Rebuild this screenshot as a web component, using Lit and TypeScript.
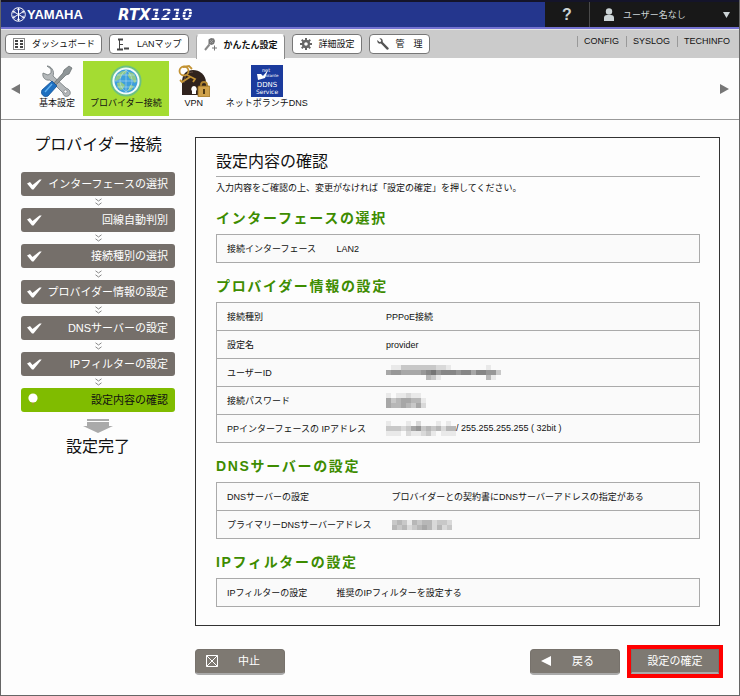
import { LitElement, html, svg, css, nothing } from "lit";
import { customElement, property } from "lit/decorators.js";

type Row = { label: string; value?: string; mask?: string[] };
type Section = { title: string; rows: Row[] };

// Each digit is the darkness (0-9) of one mosaic cell.
const SECTIONS: Section[] = [
  { title: "インターフェースの選択", rows: [{ label: "接続インターフェース", value: "LAN2" }] },
  {
    title: "プロバイダー情報の設定",
    rows: [
      { label: "接続種別", value: "PPPoE接続" },
      { label: "設定名", value: "provider" },
      { label: "ユーザーID", mask: ["01133333332210000000100", "56655556786777677577663", "00000000431000000000410"] },
      { label: "接続パスワード", mask: ["10112110", "53455441", "54454352"] },
      { label: "PPインターフェースの IPアドレス", mask: ["10001020001010", "33323563434244", "11102112310111"], value: "/ 255.255.255.255 ( 32bit )" },
    ],
  },
  {
    title: "DNSサーバーの設定",
    rows: [
      { label: "DNSサーバーの設定", value: "プロバイダーとの契約書にDNSサーバーアドレスの指定がある" },
      { label: "プライマリーDNSサーバーアドレス", mask: ["343143442332", "434234542423"] },
    ],
  },
  { title: "IPフィルターの設定", rows: [{ label: "IPフィルターの設定", value: "推奨のIPフィルターを設定する" }] },
];

const STEPS = [
  "インターフェースの選択",
  "回線自動判別",
  "接続種別の選択",
  "プロバイダー情報の設定",
  "DNSサーバーの設定",
  "IPフィルターの設定",
  "設定内容の確認",
];

const gearTeeth = [0, 45, 90, 135, 180, 225, 270, 315];

const icons = {
  dashboard: html`<svg width="12" height="12" viewBox="0 0 12 12" aria-hidden="true">
    <rect x="0.5" y="0.5" width="11" height="11" fill="#fff" stroke="#888" />
    <path d="M2 2h3v2H2zM2 5h3v2H2zM2 8h3v2H2zM7 2h3v2H7zM7 5h3v2H7zM7 8h3v2H7z" fill="#444" />
  </svg>`,
  map: html`<svg width="13" height="13" viewBox="0 0 13 13" aria-hidden="true">
    <path d="M1 1.500h5M0 11.500h6M7 10.500h5" fill="none" stroke="#444" stroke-width="2" />
    <path d="M2.500 1v11M3 6.500h3" stroke="#444" />
  </svg>`,
  wand: html`<svg width="13" height="13" viewBox="0 0 13 13" aria-hidden="true">
    <path d="M1 12L5.500 6.500" stroke="#888" stroke-width="2" />
    <path d="M4.500 1.500L7 0l3 .5L11 3l-1 3-2.500 1L4.500 6z" fill="#777" />
    <path d="M6 2l3 3M9 2L6 5" stroke="#aaa" stroke-width="0.700" />
    <path d="M10.500 7.500v5M8 10h5" stroke="#777" />
  </svg>`,
  gear: html`<svg width="12" height="12" viewBox="0 0 12 12" aria-hidden="true">
    ${gearTeeth.map((a) => svg`<rect x="5" y="0" width="2" height="3" fill="#666" transform="rotate(${a} 6 6)" />`)}
    <circle cx="6" cy="6" r="3" fill="none" stroke="#666" stroke-width="2.4" />
  </svg>`,
  wrench: html`<svg width="12" height="12" viewBox="0 0 12 12" aria-hidden="true">
    <path d="M2.300 0.300L4.200 2.200 3.900 3.700 2.400 4 0.400 2.100C-0.200 4.300 1.500 6.200 3.900 5.600L9.700 11.400C10.900 12.400 12.500 10.900 11.400 9.700L5.700 4C6.200 1.600 4.500-0.300 2.300 0.300z" fill="#555" />
  </svg>`,
  tools: html`<svg width="32" height="32" viewBox="0 0 32 32" aria-hidden="true">
    <path d="M6 1l4 3v4l-3 2-5-2c-1 4 2 8 7 7l13 13c0 3 3 4 5 3 3-1 3-5 0-7l-2-1L12 11c2-5-2-10-6-10z" fill="#b4b8ba" stroke="#70777a" stroke-width="0.800" />
    <circle cx="24.500" cy="26.500" r="1.600" fill="#fff" stroke="#777" stroke-width="0.600" />
    <path d="M28 1l3 2-3 6-3 1-10 10-2-2L22 8l1-3z" fill="#8f9698" stroke="#646a6c" stroke-width="0.700" />
    <path d="M11 16l5 5L7 31c-4 2-8-2-6-6z" fill="#1e6fc0" stroke="#0e4f95" stroke-width="0.800" />
    <path d="M11 19L4 27" stroke="#63b3f0" stroke-width="1.400" />
  </svg>`,
  globe: html`<svg width="32" height="32" viewBox="0 0 32 32" aria-hidden="true">
    <circle cx="16" cy="16" r="15.500" fill="#6cc084" />
    <circle cx="16" cy="16" r="13.600" fill="#f2fbfb" />
    <circle cx="16" cy="16" r="11.500" fill="#3e9fdc" />
    <path d="M8 9c3-3 7-4 9-3l-2 3-3 1-1 3-3 2-3 1c0-3 1-5 3-7zM7 18l4-1 4 3-2 4-2 1c-2-1-4-4-4-7zM19 7l4 1c3 3 4 6 3 9l-2 1-1-3-3-1-2-3zM20 20l4 1-3 4-3 1z" fill="#8fc98a" />
    <path d="M16 5v22M5 16h22M7 10h18M7 22h18M16 5c-8 6-8 16 0 22M16 5c8 6 8 16 0 22" fill="none" stroke="#c4e4f4" stroke-width="0.500" />
  </svg>`,
  vpn: html`<svg width="32" height="32" viewBox="0 0 32 32" aria-hidden="true">
    <path d="M4 30V18C4 8 9 5 15 5s13 4 13 13v12z" fill="#30231d" />
    <path d="M6 18c0-7 4-11 9-11" fill="none" stroke="#665046" />
    <path d="M16 21a3 3 0 0 1 2 5v3h-4v-3a3 3 0 0 1 2-5z" fill="#fff" />
    <circle cx="6" cy="6" r="4.500" fill="none" stroke="#c39334" stroke-width="1.800" />
    <path d="M9 10l8 4-2 3M12 12l-8 5-2-2M5 2l6-1 3 3" fill="none" stroke="#c39334" stroke-width="1.800" />
    <path d="M23 22v-2c0-4 6-4 6 0v2" fill="none" stroke="#af8430" stroke-width="1.800" />
    <rect x="20" y="21" width="12" height="11" rx="1" fill="#d0a24a" stroke="#8c6620" stroke-width="0.800" />
    <path d="M26 24v5" stroke="#513b12" stroke-width="2" />
  </svg>`,
  ddns: html`<svg width="32" height="32" viewBox="0 0 32 32" aria-hidden="true">
    <rect width="32" height="32" fill="#1b3b9d" />
    <path d="M6 9h4l2 2 5-6-3 8-7 2z" fill="#fff" />
    <g fill="#fff" font-family="DejaVu Sans, sans-serif" text-anchor="middle">
      <text x="15" y="7" font-size="5">net</text>
      <text x="20" y="12" font-size="4">volante</text>
      <text x="16" y="22" font-size="7">DDNS</text>
      <text x="16" y="29" font-size="6">Service</text>
    </g>
  </svg>`,
};

const SHARED = css`
  * { box-sizing: border-box; }
  svg { display: block; flex: none; }
  button { font: inherit; border: 0; cursor: pointer; }
  a { color: inherit; text-decoration: none; }
`;

@customElement("mosaic-mask")
class MosaicMask extends LitElement {
  @property({ attribute: false }) rows: string[] = [];
  static styles = css`
    :host { display: inline-block; vertical-align: middle; }
    svg { display: block; }
  `;
  render() {
    const w = this.rows[0].length * 5;
    const h = this.rows.length * 5;
    return html`<svg width=${w} height=${h} role="img" aria-label="非表示">
      ${this.rows.map((r, y) =>
        [...r].map((c, x) => svg`<rect x=${x * 5} y=${y * 5} width="5" height="5" fill="#333" fill-opacity=${Number(c) / 12} />`)
      )}
    </svg>`;
  }
}

@customElement("site-header")
class SiteHeader extends LitElement {
  static styles = [SHARED, css`
    :host { display: block; }
    .bar { display: flex; height: 29px; border-top: 2px solid #14142a; border-bottom: 2px solid #7472d2; background: #24368d; color: #fff; }
    .brand { display: flex; flex: 1; align-items: center; padding-left: 10px; }
    .yamaha { display: flex; align-items: center; gap: 1px; width: 107px; font: bold 13px/24px "Liberation Sans", sans-serif; }
    .model { font: italic bold 15px/24px "DejaVu Sans", sans-serif; }
    .striped { color: transparent; background: repeating-linear-gradient(#fff 0 2px, #6672b4 2px 3px); background-clip: text; -webkit-background-clip: text; }
    .help, .user { display: flex; align-items: center; background: #181818; color: #ccd4d6; padding: 0; }
    .help { justify-content: center; width: 44px; font-weight: bold; font-size: 16px; }
    .user { width: 150px; padding: 0 9px 0 14px; gap: 9px; border-left: 1px solid #4a4a4a; }
    .name { flex: 1; text-align: left; }
    .tools { display: flex; height: 29px; padding: 4px 9px 0 4px; border-top: 1px solid #e6e6e6; background: #cbcbcb; }
    .tabs { display: flex; flex: 1; gap: 7px; align-items: flex-start; }
    .tab { display: flex; align-items: center; gap: 7px; height: 20px; padding: 0 6px 0 7px; background: #fff; border: 1px solid #777; border-radius: 4px; white-space: nowrap; color: #111; }
    .active { height: 25px; padding-bottom: 5px; border-bottom: 0; border-radius: 4px 4px 0 0; font-weight: bold; border-color: #fff #888 #fff #aaa; }
    .links { display: flex; align-items: flex-start; color: #111; padding-top: 2px; }
    .links a { padding: 0 7px 0 6px; border-left: 1px solid #999; line-height: 11px; }
    .links a:last-child { padding-right: 0; }
  `];
  render() {
    return html`<header>
      <div class="bar">
        <div class="brand">
          <span class="yamaha">
            <svg width="15" height="15" viewBox="0 0 15 15" aria-hidden="true">
              <circle cx="7.500" cy="7.500" r="6.800" fill="none" stroke="#fff" />
              <path d="M7.500 1v13M2 4.300l11 6.400M13 4.300L2 10.700" stroke="#fff" />
              <path d="M6 3l1.500-1L9 3M2.800 6.300V4.600l1.600-.8M12.200 6.300V4.600l-1.600-.8M6 12l1.500 1L9 12M2.800 8.700v1.700l1.600.8M12.200 8.700v1.700l-1.600.8" fill="none" stroke="#fff" stroke-width="0.800" />
            </svg>YAMAHA</span>
          <span class="model">RTX<span class="striped">1210</span></span>
        </div>
        <button class="help">?</button>
        <button class="user">
          <svg width="10" height="14" viewBox="0 0 10 14" aria-hidden="true"><circle cx="5" cy="3.500" r="3.200" fill="#ccd4d6" /><path d="M0 13V10c0-2 1-3 3-3h4c2 0 3 1 3 3v3z" fill="#ccd4d6" /></svg>
          <span class="name">ユーザー名なし</span>
          <svg width="7" height="6" viewBox="0 0 7 6" aria-hidden="true"><path d="M0 0h7L3.500 6z" fill="#ccd4d6" /></svg>
        </button>
      </div>
      <div class="tools">
        <nav class="tabs">
          <a class="tab" href="#dashboard">${icons.dashboard}ダッシュボード</a>
          <a class="tab" href="#lanmap">${icons.map}LANマップ</a>
          <a class="tab active" href="#easy" aria-current="page">${icons.wand}かんたん設定</a>
          <a class="tab" href="#detail">${icons.gear}詳細設定</a>
          <a class="tab" href="#admin">${icons.wrench}管　理</a>
        </nav>
        <nav class="links"><a href="#config">CONFIG</a><a href="#syslog">SYSLOG</a><a href="#techinfo">TECHINFO</a></nav>
      </div>
    </header>`;
  }
}

@customElement("category-nav")
class CategoryNav extends LitElement {
  static styles = [SHARED, css`
    :host { display: block; }
    .nav { display: flex; align-items: center; height: 62px; padding: 3px 10px; border-bottom: 1px solid #999; }
    .arrow { padding: 0; background: none; }
    .tiles { display: flex; flex: 1; margin-left: 11px; }
    .tile { display: flex; flex-direction: column; align-items: center; min-width: 50px; height: 55px; padding: 4px 7px 0; line-height: 12px; white-space: nowrap; }
    .tile:first-child { min-width: 52px; }
    .tile.on { background: #a4dc32; }
  `];
  render() {
    return html`<nav class="nav">
      <button class="arrow" aria-label="前へ"><svg width="9" height="10" viewBox="0 0 9 10"><path d="M9 0v10L0 5z" fill="#777" /></svg></button>
      <div class="tiles">
        <a class="tile" href="#basic">${icons.tools}基本設定</a>
        <a class="tile on" href="#provider" aria-current="page">${icons.globe}プロバイダー接続</a>
        <a class="tile" href="#vpn">${icons.vpn}VPN</a>
        <a class="tile" href="#netvolante">${icons.ddns}ネットボランチDNS</a>
      </div>
      <button class="arrow" aria-label="次へ"><svg width="9" height="10" viewBox="0 0 9 10"><path d="M0 0v10L9 5z" fill="#777" /></svg></button>
    </nav>`;
  }
}

@customElement("step-list")
class StepList extends LitElement {
  static styles = [SHARED, css`
    :host { display: block; text-align: center; }
    .title { margin: 1px 0 15px; font-size: 16px; font-weight: normal; line-height: 24px; white-space: nowrap; }
    .steps { list-style: none; margin: 0; padding: 0; }
    .step { display: flex; align-items: center; justify-content: space-between; height: 24px; padding: 0 7px 0 6px; border-radius: 3px; background: #756f6a; color: #fff; font-size: 11px; line-height: 22px; white-space: nowrap; }
    .current { background: #80bc00; color: #111; }
    .gap { display: flex; justify-content: center; align-items: center; height: 12px; }
    .arrow { margin: 7px auto 2px; }
    .done { margin: 0; font-size: 16px; line-height: 24px; }
  `];
  render() {
    const last = STEPS.length - 1;
    return html`<h1 class="title">プロバイダー接続</h1>
      <ol class="steps">
        ${STEPS.map((s, i) => html`<li>
          <div class="step ${i === last ? "current" : ""}">
            ${i === last
              ? html`<svg width="12" height="16" viewBox="0 0 12 16" aria-hidden="true"><path d="M5 9h2l-1 6z" fill="#a98a3c" /><circle cx="6" cy="6" r="4.600" fill="#fff" /></svg>`
              : html`<svg width="15" height="11" viewBox="0 0 15 11" aria-hidden="true"><path d="M0 4.500l3-1.500 2.500 3L12.500 0.500h2.200L6.500 10.500h-1.500z" fill="#fff" /></svg>`}
            <span>${s}</span>
          </div>
          ${i === last ? nothing : html`<div class="gap"><svg width="7" height="8" viewBox="0 0 7 8" aria-hidden="true"><path d="M0.500 0.800L3.500 3l3-2.200M0.500 4.800L3.500 7l3-2.200" fill="none" stroke="#888" /></svg></div>`}
        </li>`)}
      </ol>
      <svg class="arrow" width="30" height="14" viewBox="0 0 30 14" aria-hidden="true"><path d="M4 0h22v2H4z" fill="#aaa" /><path d="M4 3h22v4h4l-15 7L0 7h4z" fill="#aaa" /></svg>
      <p class="done">設定完了</p>`;
  }
}

@customElement("confirm-panel")
class ConfirmPanel extends LitElement {
  static styles = [SHARED, css`
    :host { display: block; }
    .panel { margin: 5px 3px 0 0; padding: 12px 19px 18px 20px; border: 1px solid #333; }
    .head { margin: 0; padding-bottom: 2px; border-bottom: 1px solid #aaa; font-size: 16px; font-weight: normal; line-height: 24px; }
    .lead { margin: 4px 0 0; line-height: 14px; }
    .section { margin: 13px 0 6px; color: #3d8c00; font-size: 14px; font-weight: bold; line-height: 20px; letter-spacing: 0.12em; }
    .data { width: 100%; border-collapse: collapse; background: #fafafa; border: 1px solid #aaa; }
    .data th, .data td { height: 28px; padding: 0 10px; border-bottom: 1px solid #aaa; text-align: left; font-weight: normal; white-space: nowrap; line-height: 12px; }
    .data th { width: 110px; }
    .actions { display: flex; align-items: center; gap: 7px; margin-top: 19px; }
    .btn { display: flex; align-items: center; width: 90px; height: 26px; padding: 0 4px 0 10px; border-radius: 4px; border: 1px solid #77726c; border-bottom: 2px solid #aaa; background: #7e7972; color: #fff; font-size: 11px; line-height: 20px; white-space: nowrap; }
    .btn span { flex: 1; text-align: center; }
    .back { margin-left: auto; }
    .mark { border: 4px solid #f00; }
    .mark .btn { width: 88px; height: 25px; border-radius: 0; padding: 0; }
  `];
  render() {
    return html`<section class="panel">
        <h2 class="head">設定内容の確認</h2>
        <p class="lead">入力内容をご確認の上、変更がなければ「設定の確定」を押してください。</p>
        ${SECTIONS.map((s) => html`<h3 class="section">${s.title}</h3>
          <table class="data" aria-label=${s.title}><tbody>
            ${s.rows.map((r) => html`<tr><th scope="row">${r.label}</th>
              <td>${r.mask ? html`<mosaic-mask .rows=${r.mask}></mosaic-mask>` : nothing}${r.value ?? nothing}</td></tr>`)}
          </tbody></table>`)}
      </section>
      <div class="actions">
        <button class="btn"><svg width="12" height="12" viewBox="0 0 12 12" aria-hidden="true"><path d="M0.500 0.500h11v11h-11zL11.500 11.500M11.500 0.500L0.500 11.500" fill="none" stroke="#fff" /></svg><span>中止</span></button>
        <button class="btn back"><svg width="10" height="10" viewBox="0 0 10 10" aria-hidden="true"><path d="M10 0v10L0 5z" fill="#fff" /></svg><span>戻る</span></button>
        <div class="mark"><button class="btn"><span>設定の確定</span></button></div>
      </div>`;
  }
}

@customElement("app-root")
class AppRoot extends LitElement {
  static styles = css`
    :host { display: block; box-sizing: border-box; min-height: 100vh; border: 1px solid #666; border-top: 0; background: #fdfdfd; color: #111; font: 9px/12px "Liberation Sans", "Noto Sans CJK JP", sans-serif; }
    .main { display: grid; grid-template-columns: 154px minmax(0, 1fr); gap: 20px; padding: 12px 16px 16px 20px; }
  `;
  render() {
    return html`<site-header></site-header>
      <category-nav></category-nav>
      <main class="main"><step-list></step-list><confirm-panel></confirm-panel></main>`;
  }
}
